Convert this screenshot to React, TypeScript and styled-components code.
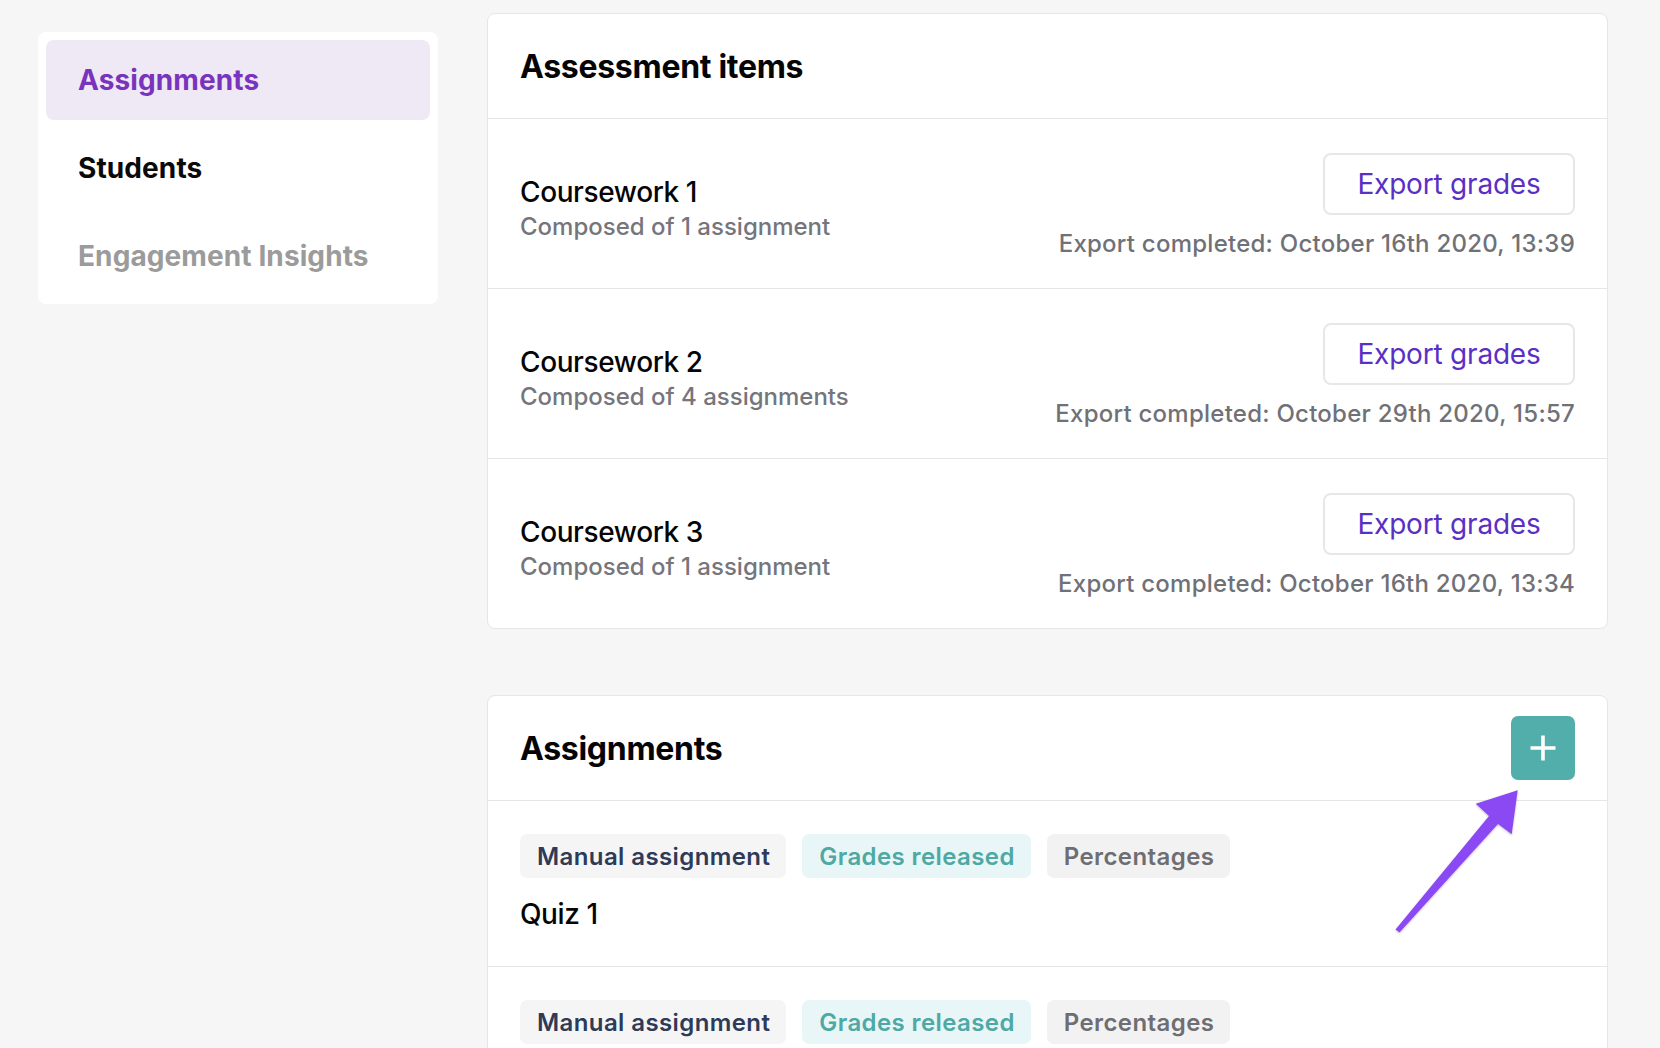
import React from "react";
import styled, { createGlobalStyle } from "styled-components";

const GlobalStyle = createGlobalStyle`
  html, body {
    margin: 0;
    padding: 0;
    background: #f6f6f6;
    font-family: Inter, "Noto Sans", "Liberation Sans", sans-serif;
    -webkit-font-smoothing: antialiased;
  }
  * { box-sizing: border-box; }
`;

const Page = styled.div`
  display: flex;
  align-items: flex-start;
  gap: 49px;
  padding: 13px 52px 0 38px;
  height: 100vh;
  overflow: hidden;
`;

const Sidebar = styled.nav`
  flex: 0 0 400px;
  margin-top: 19px;
  background: #ffffff;
  border-radius: 8px;
  padding: 8px;
  display: flex;
  flex-direction: column;
  gap: 8px;
`;

const NavItem = styled.div<{ $variant: "active" | "normal" | "muted" }>`
  height: 80px;
  display: flex;
  align-items: center;
  padding-left: 32px;
  border-radius: 8px;
  font-size: 28px;
  font-weight: 700;
  letter-spacing: 0.1px;
  background: ${(p) => (p.$variant === "active" ? "#efe8f5" : "transparent")};
  color: ${(p) =>
    p.$variant === "active" ? "#7a33bd" : p.$variant === "muted" ? "#9b9b9b" : "#0a0a0a"};
`;

const Main = styled.main`
  flex: 1;
  display: flex;
  flex-direction: column;
  gap: 66px;
`;

const Card = styled.section`
  position: relative;
  background: #ffffff;
  border: 1px solid #e6e6e6;
  border-radius: 8px;
`;

const CardHeader = styled.header`
  height: 105px;
  display: flex;
  align-items: center;
  justify-content: space-between;
  padding: 0 32px 0 32px;
  border-bottom: 1px solid #e6e6e6;
`;

const CardTitle = styled.h2`
  margin: 0;
  font-size: 32px;
  font-weight: 700;
  color: #050505;
  letter-spacing: -0.3px;
`;

const Row = styled.div<{ $last?: boolean }>`
  display: flex;
  align-items: center;
  justify-content: space-between;
  padding: 34px 32px 29px 32px;
  border-bottom: ${(p) => (p.$last ? "none" : "1px solid #e6e6e6")};
`;

const ItemInfo = styled.div`
  display: flex;
  flex-direction: column;
  gap: 3px;
  padding-top: 4px;
`;

const ItemTitle = styled.div`
  font-size: 28px;
  line-height: 34px;
  font-weight: 500;
  color: #050505;
  letter-spacing: -0.4px;
`;

const ItemSub = styled.div`
  font-size: 24px;
  line-height: 30px;
  font-weight: 500;
  color: #75757c;
  letter-spacing: 0;
`;

const ExportBlock = styled.div`
  display: flex;
  flex-direction: column;
  align-items: flex-end;
  gap: 14px;
`;

const ExportButton = styled.button`
  height: 62px;
  width: 252px;
  border: 2px solid #e7e7e9;
  border-radius: 8px;
  background: #ffffff;
  font-family: inherit;
  font-size: 28px;
  font-weight: 400;
  color: #5a2fc4;
  letter-spacing: -0.2px;
  cursor: pointer;
`;

const ExportStatus = styled.div`
  font-size: 24px;
  line-height: 30px;
  font-weight: 500;
  color: #707177;
  letter-spacing: 0.25px;
`;

const AddButton = styled.button`
  width: 64px;
  height: 64px;
  border: none;
  border-radius: 7px;
  background: #52aeaa;
  display: flex;
  align-items: center;
  justify-content: center;
  padding: 0;
  cursor: pointer;
`;

const AssignmentRow = styled.div<{ $last?: boolean }>`
  display: flex;
  flex-direction: column;
  align-items: flex-start;
  gap: 16px;
  padding: 33px 32px 32px 32px;
  border-bottom: ${(p) => (p.$last ? "none" : "1px solid #e6e6e6")};
`;

const Tags = styled.div`
  display: flex;
  gap: 16px;
`;

const tagColors = {
  type: { bg: "#f5f5f6", fg: "#2e3a56" },
  released: { bg: "#e8f6f7", fg: "#4ea8a3" },
  scale: { bg: "#f2f2f3", fg: "#6e6e72" },
};

const Tag = styled.span<{ $kind: keyof typeof tagColors }>`
  height: 44px;
  display: inline-flex;
  align-items: center;
  padding: 0 16px 0 17px;
  border-radius: 7px;
  font-size: 24px;
  font-weight: 600;
  letter-spacing: 0.4px;
  background: ${(p) => tagColors[p.$kind].bg};
  color: ${(p) => tagColors[p.$kind].fg};
`;

const AssignmentTitle = styled.div`
  font-size: 28px;
  line-height: 40px;
  font-weight: 500;
  color: #050505;
  letter-spacing: -0.4px;
`;

const Arrow = styled.svg`
  position: absolute;
  left: 903px;
  top: 90px;
  width: 132px;
  height: 150px;
  overflow: visible;
  pointer-events: none;
`;

const items = [
  { title: "Coursework 1", count: "Composed of 1 assignment", date: "October 16th 2020, 13:39" },
  { title: "Coursework 2", count: "Composed of 4 assignments", date: "October 29th 2020, 15:57" },
  { title: "Coursework 3", count: "Composed of 1 assignment", date: "October 16th 2020, 13:34" },
];

const assignments = [{ title: "Quiz 1" }, { title: "Quiz 2" }];

export default function App() {
  return (
    <>
      <GlobalStyle />
      <Page>
        <Sidebar>
          <NavItem $variant="active">Assignments</NavItem>
          <NavItem $variant="normal">Students</NavItem>
          <NavItem $variant="muted">Engagement Insights</NavItem>
        </Sidebar>
        <Main>
          <Card>
            <CardHeader>
              <CardTitle>Assessment items</CardTitle>
            </CardHeader>
            {items.map((it, i) => (
              <Row key={it.title} $last={i === items.length - 1}>
                <ItemInfo>
                  <ItemTitle>{it.title}</ItemTitle>
                  <ItemSub>{it.count}</ItemSub>
                </ItemInfo>
                <ExportBlock>
                  <ExportButton>Export grades</ExportButton>
                  <ExportStatus>Export completed: {it.date}</ExportStatus>
                </ExportBlock>
              </Row>
            ))}
          </Card>
          <Card>
            <CardHeader>
              <CardTitle>Assignments</CardTitle>
              <AddButton aria-label="Add assignment">
                <svg width="28" height="28" viewBox="0 0 28 28">
                  <path d="M14 1.5V26.5M1.5 14H26.5" stroke="#ffffff" strokeWidth="3.6" />
                </svg>
              </AddButton>
            </CardHeader>
            {assignments.map((a, i) => (
              <AssignmentRow key={a.title} $last={i === assignments.length - 1}>
                <Tags>
                  <Tag $kind="type">Manual assignment</Tag>
                  <Tag $kind="released">Grades released</Tag>
                  <Tag $kind="scale">Percentages</Tag>
                </Tags>
                <AssignmentTitle>{a.title}</AssignmentTitle>
              </AssignmentRow>
            ))}
            <Arrow viewBox="0 0 132 150">
              <defs>
                <filter id="arrowShadow" x="-20%" y="-20%" width="140%" height="140%">
                  <feDropShadow dx="0" dy="1" stdDeviation="1.2" floodColor="#000" floodOpacity="0.25" />
                </filter>
              </defs>
              <polygon
                points="4.5,143.5 98,30 84.7,17.7 126.7,4.3 120.7,48.3 107,38 8.5,146.5"
                fill="#8b49f4"
                filter="url(#arrowShadow)"
              />
            </Arrow>
          </Card>
        </Main>
      </Page>
    </>
  );
}
